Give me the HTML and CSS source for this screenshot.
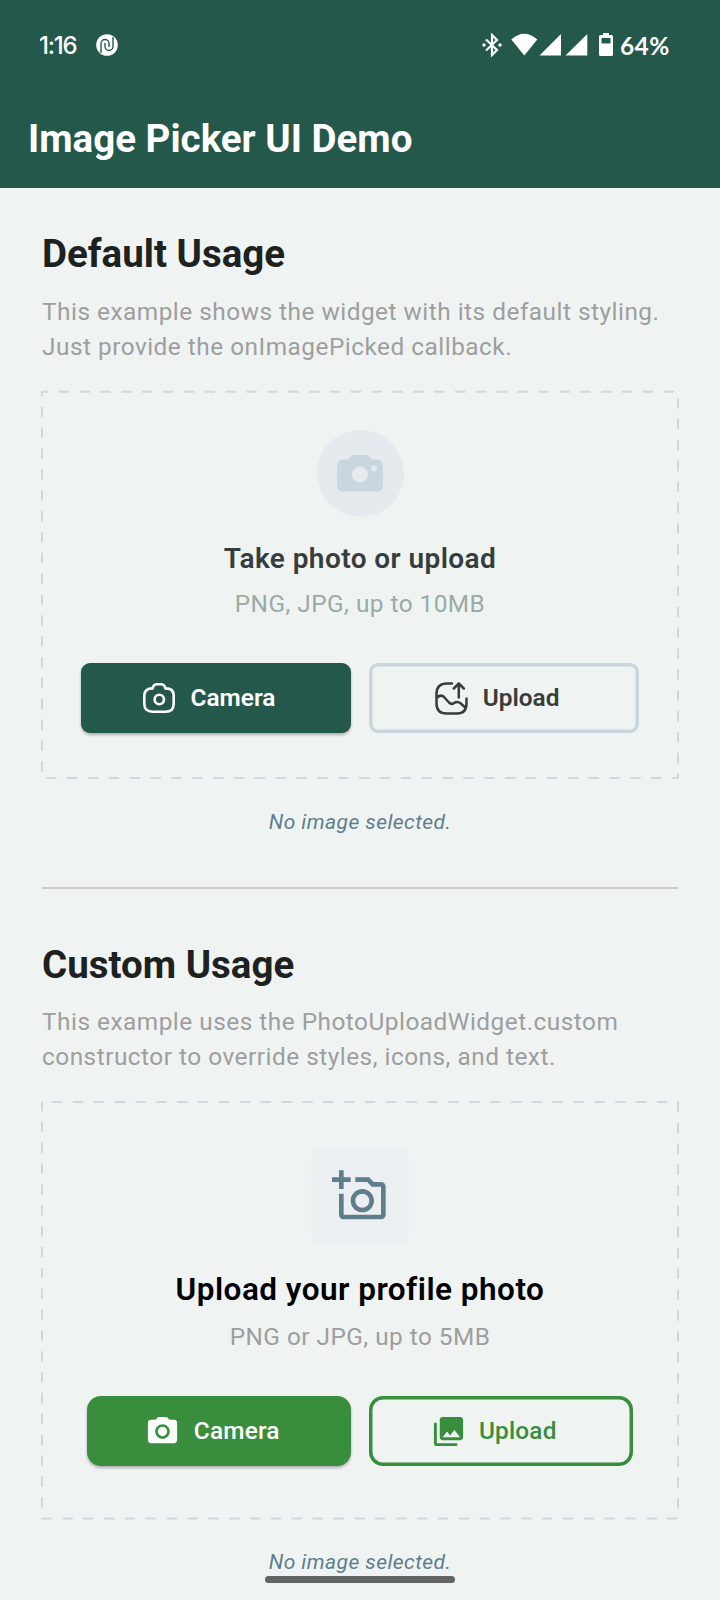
FILE: index.html
```html
<!DOCTYPE html>
<html lang="en">
<head>
<meta charset="utf-8">
<title>Image Picker UI Demo</title>
<link rel="stylesheet" href="styles.css">
</head>
<body>
<header class="appbar">
  <div class="status">
    <span class="clock">1:16</span>
    <svg class="notif" width="22" height="22" viewBox="0 0 22 22"><circle cx="11" cy="11" r="10.8" fill="#fff"/><path d="M5 19V9.500a4 4 0 0 1 8 0V13M17 3V12.500a4 4 0 0 1-8 0V9" fill="none" stroke="#24584a" stroke-width="1.4"/></svg>
    <span class="spacer"></span>
    <svg class="bt" width="20" height="24" viewBox="0 0 20 24"><path d="M4 6.500 15 17l-5 5V2l5 5L4 17.500" fill="none" stroke="#fff" stroke-width="2.200"/><circle cx="2" cy="12" r="1.700" fill="#fff"/><circle cx="18" cy="12" r="1.700" fill="#fff"/></svg>
    <svg class="signals" width="78" height="24" viewBox="0 0 78 24"><path d="M.3 6.500Q13-5 26.300 6.500L13.300 22.500zM28.500 22.500 50 1v21.500zM54.500 22.500 76.300 1v21.500z" fill="#fff"/></svg>
    <svg class="battery" width="14" height="24" viewBox="0 0 14 24"><path fill="#fff" fill-rule="evenodd" d="M4 0h6v2h2.500Q14 2 14 3.500v18Q14 23 12.500 23h-11Q0 23 0 21.500v-18Q0 2 1.500 2H4zM2.500 5v5.500h9V5z"/></svg>
    <span class="percent">64%</span>
  </div>
  <h1 class="title">Image Picker UI Demo</h1>
</header>
<main class="content">
  <section class="usage">
    <h2 class="heading">Default Usage</h2>
    <p class="desc">This example shows the widget with its default styling.<br>Just provide the onImagePicked callback.</p>
    <div class="card">
      <svg class="dashes" width="640" height="391" viewBox="0 0 640 391"><path class="dash" d="M2 2.700H638V389H2Z" stroke-dashoffset="4.2"/></svg>
      <div class="badge round">
        <svg width="46" height="37" viewBox="0 0 46 37"><path fill="#cad6de" fill-rule="evenodd" d="M14 1.500Q15.500 0 18 0h10q2.500 0 4 1.500L34 3.700q1 .8 3 .8h2q7 0 7 7V30q0 6.500-6.500 6.500h-33Q0 36.500 0 30V11.500q0-7 7-7h2q2 0 3-.8zM23 11.500a8 8 0 1 0 0 16 8 8 0 0 0 0-16zM37 10.500a3 3 0 1 0 0 6 3 3 0 0 0 0-6z"/></svg>
      </div>
      <h3 class="card-title">Take photo or upload</h3>
      <p class="hint">PNG, JPG, up to 10MB</p>
      <div class="actions">
        <button class="btn primary"><svg width="32" height="30" viewBox="0 0 32 30"><path d="M9.500 5.400Q10.500 1.500 13.500 1.300h5q3 .2 4 4.100Q30.700 5.400 30.700 12.500V20.500q0 8.200-8.200 8.200h-13Q1.300 28.700 1.300 20.500v-8Q1.300 5.400 9.500 5.400z" fill="none" stroke="#fff" stroke-width="2.600"/><circle cx="16.300" cy="16.500" r="4.700" fill="none" stroke="#fff" stroke-width="2.600"/></svg><span>Camera</span></button>
        <button class="btn outline"><svg width="33" height="33" viewBox="0 0 33 33" fill="none" stroke="#363d3b" stroke-width="2.500" stroke-linecap="round" stroke-linejoin="round"><path d="M17 1.500H12Q1.500 1.500 1.500 12v9.500q0 10 10 10h10.500q9.500 0 9.500-10V16.500M2 15.500Q6 12 9 15l5 5.500q2.500 2.500 5 .5 3.500-2.200 6.500.3l4.500 3.900M23.800 15.500V2M18.800 6.500 23.800 1.500l5 5"/></svg><span>Upload</span></button>
      </div>
    </div>
    <p class="state">No image selected.</p>
  </section>
  <hr class="divider">
  <section class="usage custom">
    <h2 class="heading">Custom Usage</h2>
    <p class="desc">This example uses the PhotoUploadWidget.custom<br>constructor to override styles, icons, and text.</p>
    <div class="card">
      <svg class="dashes" width="640" height="421" viewBox="0 0 640 421"><path class="dash" d="M2 3H638V419.600H2Z" stroke-dashoffset="10.9"/></svg>
      <div class="badge square">
        <svg width="56" height="56" viewBox="0 0 24 24" fill="#607d8b"><path d="M21 6h-3.170L16 4h-6v2h5.120l1.830 2H21v12H5v-9H3v9c0 1.100.9 2 2 2h16c1.100 0 2-.9 2-2V8c0-1.100-.9-2-2-2zM8 14c0 2.760 2.240 5 5 5s5-2.240 5-5-2.240-5-5-5-5 2.240-5 5zm5-3c1.650 0 3 1.350 3 3s-1.350 3-3 3-3-1.350-3-3 1.350-3 3-3zM5 6h3V4H5V1H3v3H0v2h3v3h2z"/></svg>
      </div>
      <h3 class="card-title">Upload your profile photo</h3>
      <p class="hint">PNG or JPG, up to 5MB</p>
      <div class="actions">
        <button class="btn primary"><svg width="35" height="35" viewBox="0 0 24 24" fill="#fff"><circle cx="12" cy="12" r="3.200"/><path d="M9 2 7.170 4H4c-1.100 0-2 .9-2 2v12c0 1.100.9 2 2 2h16c1.100 0 2-.9 2-2V6c0-1.100-.9-2-2-2h-3.170L15 2H9zm3 15c-2.760 0-5-2.240-5-5s2.240-5 5-5 5 2.240 5 5-2.240 5-5 5z"/></svg><span>Camera</span></button>
        <button class="btn outline"><svg width="35" height="35" viewBox="0 0 24 24" fill="#388e3c"><path d="M22 16V4c0-1.100-.9-2-2-2H8c-1.100 0-2 .9-2 2v12c0 1.100.9 2 2 2h12c1.100 0 2-.9 2-2zm-11-4 2.030 2.710L16 11l4 5H8l3-4zM2 6v14c0 1.100.9 2 2 2h14v-2H4V6H2z"/></svg><span>Upload</span></button>
      </div>
    </div>
    <p class="state">No image selected.</p>
  </section>
</main>
<div class="home-bar"></div>
</body>
</html>
```
FILE: styles.css
```css
* { box-sizing: border-box; }
body {
  margin: 0;
  width: 720px;
  height: 1600px;
  overflow: hidden;
  position: relative;
  background: #eff4f3;
  font-family: Roboto, "Liberation Sans", sans-serif;
}
h1, h2, h3, p { margin: 0; }
svg { display: block; flex: none; }

.appbar { height: 188px; background: #24584a; color: #fff; }
.status {
  display: flex;
  align-items: center;
  height: 90px;
  padding: 0 49px 0 39px;
  font-family: Lato, sans-serif;
  font-size: 24.5px;
  font-weight: 700;
}
.clock {
  width: 57px;
  font-family: Inter, sans-serif;
  font-size: 24px;
  font-weight: 500;
  letter-spacing: -1.2px;
}
.spacer { flex: 1; }
.bt { margin-right: 9px; }
.signals { margin-right: 10px; }
.battery { margin-right: 7px; }
.percent { width: 51px; white-space: nowrap; letter-spacing: .4px; }
.title {
  padding: 25px 28px 0;
  font-size: 38.5px;
  line-height: 48px;
  font-weight: 700;
  white-space: nowrap;
}

.content { padding: 42px 42px 0; }
.heading {
  color: #1d2120;
  font-size: 38.5px;
  line-height: 48px;
  font-weight: 700;
}
.desc {
  margin-top: 16px;
  color: #9e9e9e;
  font-size: 24.4px;
  line-height: 35px;
  letter-spacing: .49px;
  white-space: nowrap;
}
.card {
  position: relative;
  display: flex;
  flex-direction: column;
  align-items: center;
  height: 387px;
  margin-top: 27px;
  padding-top: 39px;
}
.dashes { position: absolute; left: -2px; top: -2px; }
.dash { fill: none; stroke: #cfd8e0; stroke-width: 2; stroke-dasharray: 10.43 10.43; }
.badge { display: flex; align-items: center; justify-content: center; }
.round { width: 87px; height: 87px; border-radius: 50%; background: #e4eaed; }
.card-title {
  margin-top: 22px;
  color: #363d3b;
  font-size: 28px;
  line-height: 40px;
  font-weight: 600;
  letter-spacing: .42px;
}
.hint {
  margin-top: 7px;
  color: #9aaaa5;
  font-size: 24.4px;
  line-height: 35px;
  letter-spacing: .46px;
}
.actions {
  display: grid;
  grid-template-columns: 1fr 1fr;
  gap: 17.6px;
  width: 558.6px;
  margin-top: 42px;
}
.btn {
  display: flex;
  align-items: center;
  justify-content: center;
  gap: 16px;
  height: 70px;
  padding: 0 14px 0 0;
  border: 0;
  border-radius: 9px;
  background: none;
  color: #363d3b;
  font: 600 24.4px/32px Roboto, sans-serif;
}
.btn.primary {
  background: #24584a;
  color: #fff;
  box-shadow: 0 2px 3px rgba(0, 0, 0, .28);
}
.btn.outline { box-shadow: inset 0 0 0 3.5px #cad6de; }
.btn.outline svg { margin-right: -1px; }
.state {
  margin-top: 28px;
  color: #607d8b;
  font-size: 21px;
  line-height: 32px;
  font-style: italic;
  letter-spacing: .44px;
  text-align: center;
}
.divider { height: 2px; margin: 49px 0 0; border: 0; background: #cac9ce; }

.custom { padding-top: 52px; }
.custom .desc { margin-top: 15px; }
.custom .card { height: 417px; padding-top: 46px; }
.square { width: 98px; height: 98px; border-radius: 14px; background: #ebeff2; }
.custom .card-title {
  margin-top: 22px;
  color: #000;
  font-size: 31.5px;
  line-height: 46px;
  letter-spacing: .48px;
}
.custom .hint { color: #9e9e9e; margin-top: 6px; }
.custom .actions { width: 545.4px; margin-top: 42px; }
.custom .btn { border-radius: 14px; font-weight: 500; letter-spacing: .17px; gap: 14px; }
.custom .primary { background: #388e3c; }
.custom .outline { box-shadow: inset 0 0 0 3.5px #388e3c; color: #388e3c; }

.home-bar {
  position: absolute;
  left: 265px;
  top: 1576px;
  width: 190px;
  height: 7px;
  border-radius: 4px;
  background: #616563;
}
```
